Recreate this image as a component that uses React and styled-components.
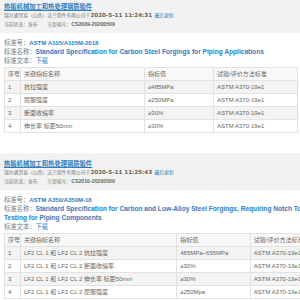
import React from "react";
import styled, { createGlobalStyle } from "styled-components";

const Global = createGlobalStyle`
  html, body { margin: 0; padding: 0; overflow: hidden; background: #fff; }
  body { font-family: "Liberation Sans", "Noto Sans CJK SC", sans-serif; }
`;

const Page = styled.div`
  margin-top: -4px;
  width: 340px;
`;

const Section = styled.section`
  display: flex;
  flex-direction: column;
  margin-bottom: 20px;
`;

const InfoBox = styled.div`
  background: #f2f2f2;
  padding: 5.5px 4px 4.5px;
  display: flex;
  flex-direction: column;
`;

const TitleLink = styled.a`
  font-size: 6.3px;
  line-height: 9px;
  height: 9px;
  font-weight: bold;
  color: #2f7dc0;
  text-decoration: underline;
  white-space: nowrap;
`;

const Meta = styled.div`
  height: 9px;
  font-size: 6px;
  line-height: 9px;
  color: #7a7a7a;
  white-space: nowrap;
  display: flex;
  align-items: baseline;
  gap: ${(p) => p.$gap || 0}px;
  transform: scale(0.8);
  transform-origin: left center;
`;

const MetaTime = styled.span`
  font-family: "DejaVu Sans", "Noto Sans CJK SC", sans-serif;
  font-size: 7px;
  font-weight: bold;
  color: #666;
`;

const MetaCode = styled.span`
  font-size: 6.5px;
  font-weight: bold;
  color: #666;
`;

const MetaLink = styled.span`
  color: #2f7dc0;
  margin-left: 3px;
`;

const Details = styled.div`
  padding: 4.5px 4px 0;
  display: flex;
  flex-direction: column;
`;

const Field = styled.div`
  font-size: 6.3px;
  line-height: 9px;
  color: #6b7b86;
`;

const Value = styled.span`
  font-size: ${(p) => p.$size}px;
  line-height: 6px;
  font-weight: bold;
  color: #2f7dc0;
`;

const Download = styled.span`
  color: #2f7dc0;
`;

const TableWrap = styled.div`
  padding: 2.5px 4px 0;
`;

const Table = styled.table`
  border-collapse: collapse;
  table-layout: fixed;
  font-size: 6px;
  color: #666;
`;

const Col = styled.col`
  width: ${(p) => p.$w}px;
`;

const Row = styled.tr`
  background: ${(p) => (p.$shade ? "#f3f3f3" : "#fff")};
`;

const HeadRow = styled.tr`
  background: #f8f8f8;
`;

const Cell = styled.td`
  border: 1px solid #e2e2e2;
  height: 12px;
  padding: 0 0 0 3px;
  white-space: nowrap;
  overflow: hidden;
  line-height: 12px;
  text-align: left;
  font-weight: normal;
`;

const sections = [
  {
    title: "热锻机械加工和热处理钢质锻件",
    time: "2020-5-11 11:24:31",
    code: "CS2009-20200509",
    no: "ASTM A105/A105M-2018",
    name: "Standard Specification for Carbon Steel Forgings for Piping Applications",
    widths: [16, 124, 69, 84],
    rows: [
      ["1", "抗拉强度", "≥485MPa", "ASTM A370-19e1"],
      ["2", "屈服强度", "≥250MPa", "ASTM A370-19e1"],
      ["3", "断面收缩率", "≥30%", "ASTM A370-19e1"],
      ["4", "伸长率 标距50mm", "≥30%", "ASTM A370-19e1"],
    ],
  },
  {
    title: "热锻机械加工和热处理钢质锻件",
    time: "2020-5-11 11:25:43",
    code: "CS2010-20200509",
    no: "ASTM A350/A350M-18",
    name: "Standard Specification for Carbon and Low-Alloy Steel Forgings, Requiring Notch Toughness Testing for Piping Components",
    widths: [16, 163, 77, 90],
    rows: [
      ["1", "LF2 CL 1 和 LF2 CL 2 抗拉强度", "485MPa~655MPa", "ASTM A370-19e1"],
      ["2", "LF2 CL 1 和 LF2 CL 2 断面收缩率", "≥30%", "ASTM A370-19e1"],
      ["3", "LF2 CL 1 和 LF2 CL 2 伸长率 标距50mm", "≥30%", "ASTM A370-19e1"],
      ["4", "LF2 CL 1 和 LF2 CL 2 屈服强度", "≥250Mpa", "ASTM A370-19e1"],
    ],
  },
];

const headers = ["序号", "关键指标名称", "指标值", "试验/评价方法标准"];

export default function App() {
  return (
    <>
      <Global />
      <Page>
        {sections.map((s, i) => (
          <Section key={i}>
            <InfoBox>
              <TitleLink>{s.title}</TitleLink>
              <Meta>
                <span>锦尔通贸易（山西）法兰管件有限公司于</span>
                <MetaTime>{s.time}</MetaTime>
                <MetaLink>最后更新</MetaLink>
              </Meta>
              <Meta $gap={12}>
                <span>当前状态：发布</span>
                <span>
                  方案编号：<MetaCode>{s.code}</MetaCode>
                </span>
              </Meta>
            </InfoBox>
            <Details>
              <Field>
                标准号：<Value $size={6}>{s.no}</Value>
              </Field>
              <Field>
                标准名称：<Value $size={6.6}>{s.name}</Value>
              </Field>
              <Field>
                标准文本：<Download>下载</Download>
              </Field>
            </Details>
            <TableWrap>
              <Table>
                <colgroup>
                  {s.widths.map((w, k) => (
                    <Col key={k} $w={w} />
                  ))}
                </colgroup>
                <thead>
                  <HeadRow>
                    {headers.map((h) => (
                      <Cell as="th" key={h}>{h}</Cell>
                    ))}
                  </HeadRow>
                </thead>
                <tbody>
                  {s.rows.map((r, k) => (
                    <Row key={k} $shade={k % 2 === 0}>
                      {r.map((c, j) => (
                        <Cell key={j}>{c}</Cell>
                      ))}
                    </Row>
                  ))}
                </tbody>
              </Table>
            </TableWrap>
          </Section>
        ))}
      </Page>
    </>
  );
}
